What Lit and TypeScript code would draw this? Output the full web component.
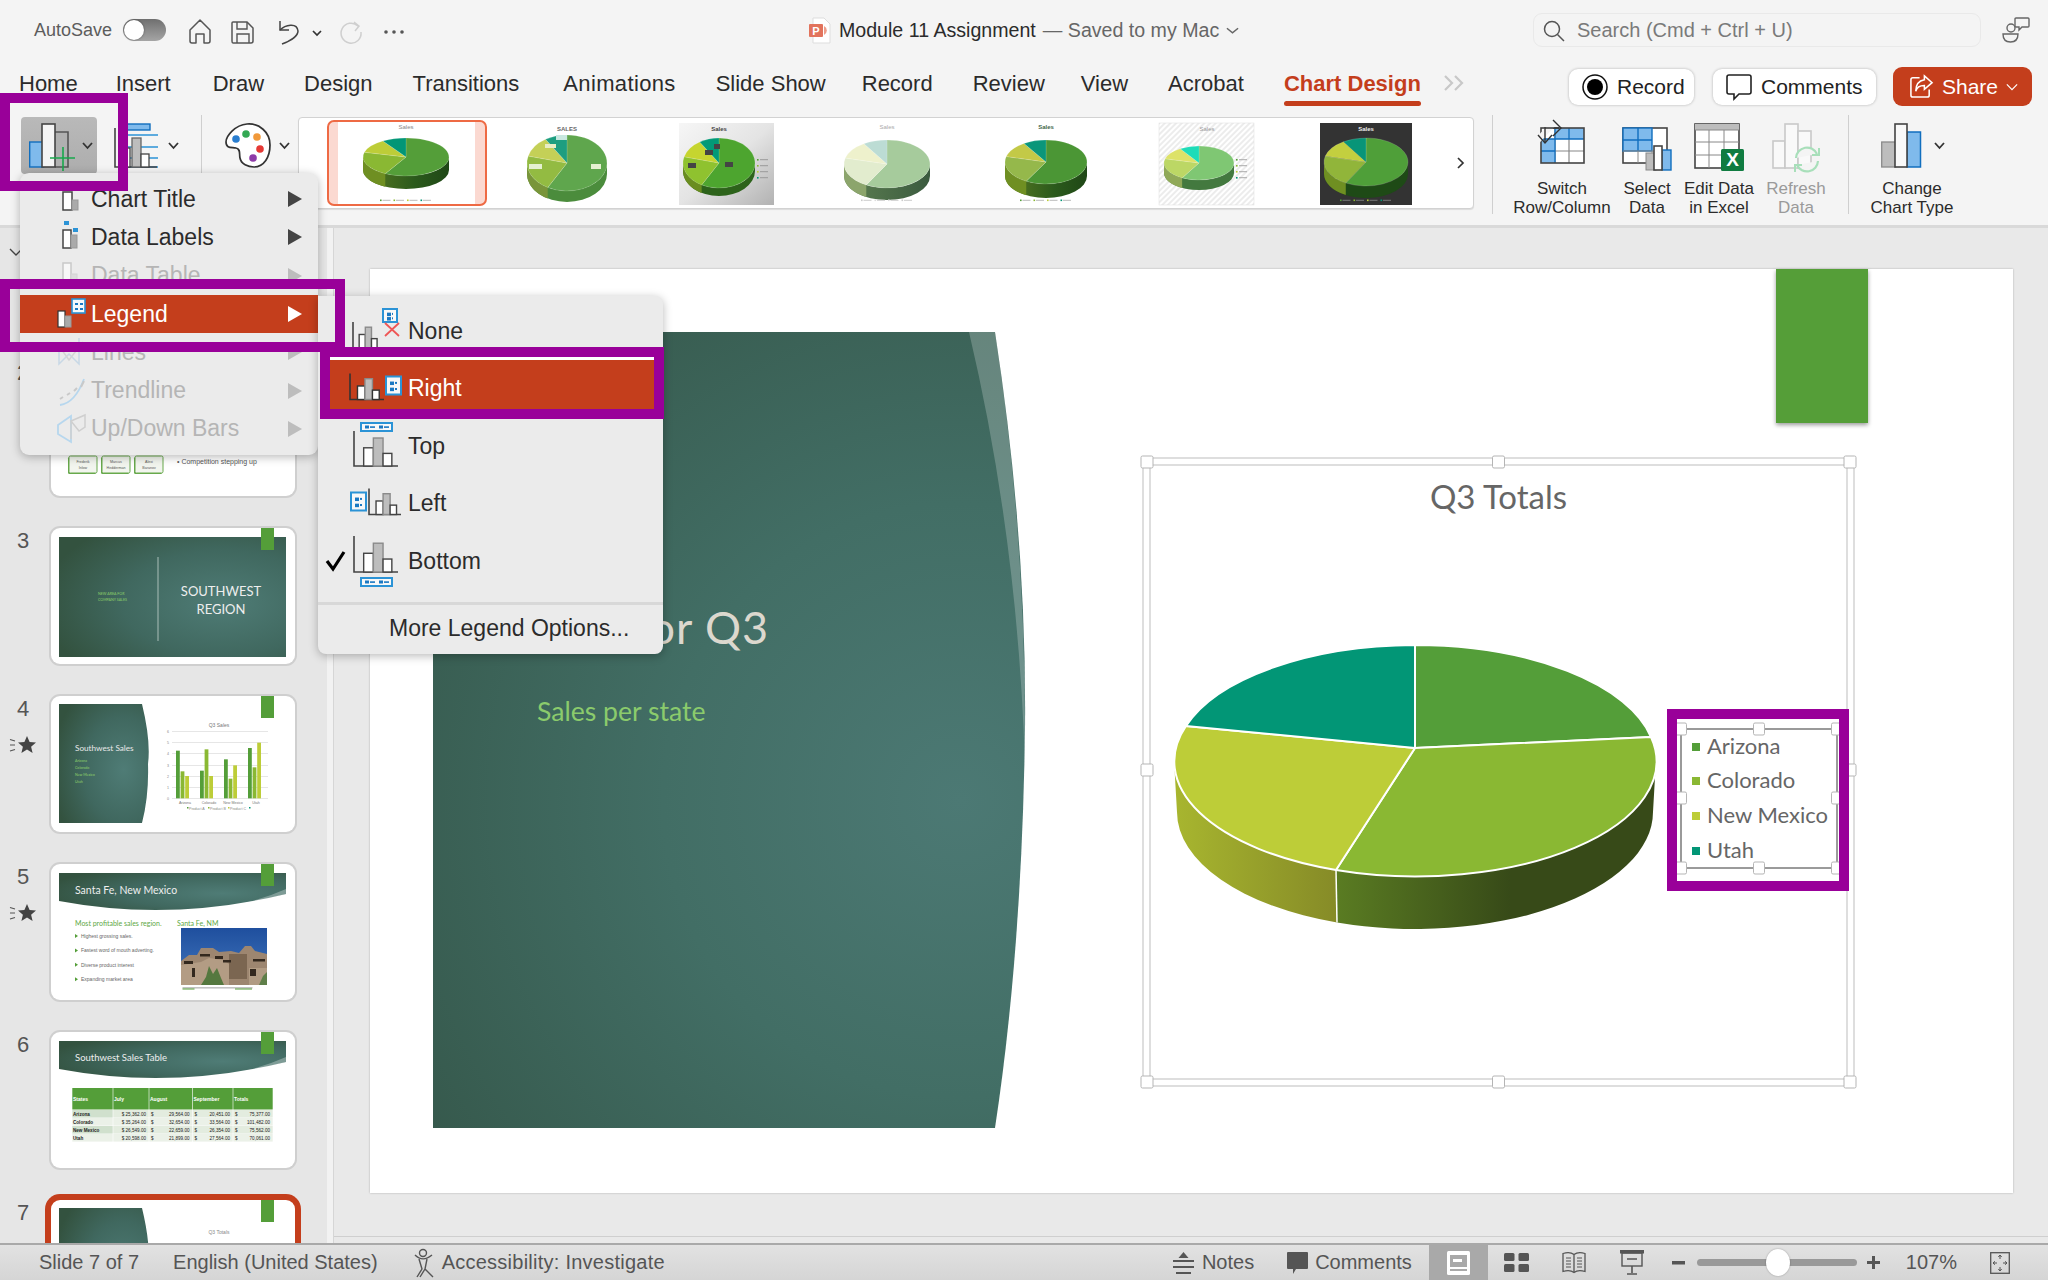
import { LitElement, html, svg, css } from "lit";
import { customElement } from "lit/decorators.js";

const THEME = ["#549e39", "#8ab833", "#bdcd38", "#029676"];

interface PieOpts {
  cx: number; cy: number; rx: number; ry: number; d: number;
  cols: string[]; sideL: string; sideR: string;
}

function pie(o: PieOpts) {
  const fr = [0.58, 0.21, 0.12, 0.09];
  const pt = (f: number) => {
    const a = f * 2 * Math.PI;
    return [o.cx + o.rx * Math.sin(a), o.cy - o.ry * Math.cos(a)];
  };
  let acc = 0;
  const wedges = fr.map((f, i) => {
    const [x1, y1] = pt(acc);
    acc += f;
    const [x2, y2] = pt(acc);
    const large = f > 0.5 ? 1 : 0;
    return svg`<path d="M${o.cx} ${o.cy}L${x1} ${y1}A${o.rx} ${o.ry} 0 ${large} 1 ${x2} ${y2}Z" fill=${o.cols[i]} stroke="#fff" stroke-opacity=".35" stroke-width=".4"/>`;
  });
  const [sx, sy] = pt(fr[0]);
  return svg`
    <path d="M${o.cx - o.rx} ${o.cy}A${o.rx} ${o.ry} 0 0 0 ${o.cx + o.rx} ${o.cy}v${o.d}A${o.rx} ${o.ry} 0 0 1 ${o.cx - o.rx} ${o.cy + o.d}Z" fill=${o.sideR}/>
    <path d="M${o.cx - o.rx} ${o.cy}A${o.rx} ${o.ry} 0 0 0 ${sx} ${sy}v${o.d}A${o.rx} ${o.ry} 0 0 1 ${o.cx - o.rx} ${o.cy + o.d}Z" fill=${o.sideL}/>
    ${wedges}`;
}

function galleryLegend(cx: number, y: number, fill: string, cols: string[] = THEME) {
  return cols.map((c, i) => {
    const x = cx - 26 + i * 13.5;
    return svg`<rect x=${x} y=${y - 1.5} width="1.6" height="1.6" fill=${c}/><rect x=${x + 2.5} y=${y - 1.2} width="8" height="1" fill=${fill}/>`;
  });
}

function sideLegend(x: number, y: number, fill: string) {
  return THEME.map((c, i) => svg`<rect x=${x} y=${y + i * 6} width="1.6" height="1.6" fill=${c}/><rect x=${x + 3} y=${y + i * 6 + 0.2} width="8" height="1" fill=${fill}/>`);
}

const galleryThumbs = [
  svg`<rect x="1" y="1" width="158" height="84" rx="6" fill="#fbd9d1" stroke="#ee6a44" stroke-width="2"/><rect x="11" y="2" width="137" height="82" fill="#fff"/>
    <text x="79" y="9" class="tiny" text-anchor="middle" fill="#888">Sales</text>
    ${pie({ cx: 79, cy: 37, rx: 43, ry: 19, d: 13, cols: THEME, sideL: "#6f8f22", sideR: "url(#wallA)" })}
    ${galleryLegend(79, 81, "#bbb")}`,
  svg`<text x="80" y="11" class="tiny bold" text-anchor="middle" fill="#666">SALES</text>
    ${pie({ cx: 80, cy: 43, rx: 40, ry: 28, d: 11, cols: ["#5fa64d", "#93bb42", "#c4d057", "#1d9e80"], sideL: "#79953a", sideR: "#4b8c3c" })}
    <rect x="42" y="44" width="13" height="5" fill="#e4f0d0"/><rect x="104" y="44" width="10" height="5" fill="#e4f0d0"/><rect x="58" y="24" width="11" height="4" fill="#e8edc4"/><rect x="69" y="15" width="11" height="5" fill="#c8e8e0"/>`,
  svg`<defs><linearGradient id="gv" x1="0" y1="0" x2="1" y2="1"><stop offset="0" stop-color="#f6f6f6"/><stop offset=".5" stop-color="#e4e4e4"/><stop offset="1" stop-color="#b2b2b2"/></linearGradient></defs>
    <rect x="32" y="3" width="95" height="82" fill="url(#gv)"/>
    <text x="72" y="11" class="tiny bold" text-anchor="middle" fill="#444">Sales</text>
    ${pie({ cx: 72, cy: 43, rx: 36, ry: 25, d: 8, cols: ["#4da52f", "#8fc22f", "#c6d52f", "#019a77"], sideL: "#6a8d20", sideR: "#2d631b" })}
    <rect x="78" y="42" width="8" height="5" fill="#444"/><rect x="58" y="30" width="8" height="5" fill="#444"/><rect x="67" y="24" width="6" height="5" fill="#444"/><rect x="41" y="43" width="8" height="5" fill="#444"/>
    ${sideLegend(110, 39, "#999")}`,
  svg`<text x="80" y="9" class="tiny" text-anchor="middle" fill="#aaa">Sales</text>
    ${pie({ cx: 80, cy: 44, rx: 43, ry: 24, d: 12, cols: ["#a6cb9c", "#e2ecce", "#eef1cc", "#bcdcd4"], sideL: "#8ca56c", sideR: "url(#wallP)" })}
    ${galleryLegend(80, 81, "#ccc", ["#ccc", "#ddd", "#ddd", "#ccc"])}`,
  svg`<text x="79" y="9" class="tiny bold" text-anchor="middle" fill="#44684a">Sales</text>
    ${pie({ cx: 79, cy: 42, rx: 41, ry: 22, d: 14, cols: ["#4b9635", "#95b84b", "#c3c947", "#0b967a"], sideL: "#6f8f22", sideR: "url(#wallA)" })}
    ${galleryLegend(79, 81, "#bbb")}`,
  svg`<defs><pattern id="hatch" width="4" height="4" patternUnits="userSpaceOnUse" patternTransform="rotate(45)"><rect width="4" height="4" fill="#fff"/><rect width="2" height="4" fill="#ececec"/></pattern></defs>
    <rect x="32" y="3" width="95" height="82" fill="url(#hatch)" stroke="#ddd" stroke-width=".5"/>
    <text x="80" y="11" class="tiny" text-anchor="middle" fill="#999">Sales</text>
    ${pie({ cx: 72, cy: 43, rx: 35, ry: 17, d: 10, cols: ["#7fc773", "#bcd765", "#dde268", "#1edcb8"], sideL: "#90a958", sideR: "#43793f" })}
    ${sideLegend(109, 39, "#aaa")}`,
  svg`<rect x="33" y="3" width="92" height="82" fill="#333"/>
    <text x="79" y="11" class="tiny bold" text-anchor="middle" fill="#eee">Sales</text>
    ${pie({ cx: 79, cy: 42, rx: 42, ry: 24, d: 12, cols: ["#4f9f39", "#91b53a", "#c3cf3f", "#089578"], sideL: "#6f8f22", sideR: "#1e4a16" })}
    ${galleryLegend(79, 81, "#777")}`,
];

function bars(x: number, y: number, w: number, h: number, stroke = "#444", fillW = "#fff", fillG = "#bdbdbd") {
  const b = y + h;
  return svg`
    <path d="M${x} ${y}V${b}H${x + w}" fill="none" stroke=${stroke} stroke-width="1.6"/>
    <rect x=${x + 0.22 * w} y=${b - 0.52 * h} width=${0.22 * w} height=${0.52 * h} fill=${fillW} stroke=${stroke} stroke-width="1.4"/>
    <rect x=${x + 0.44 * w} y=${b - 0.8 * h} width=${0.22 * w} height=${0.8 * h} fill=${fillG} stroke="#8a8a8a" stroke-width="1.4"/>
    <rect x=${x + 0.66 * w} y=${b - 0.36 * h} width=${0.2 * w} height=${0.36 * h} fill=${fillW} stroke=${stroke} stroke-width="1.4"/>`;
}

function legendV(x: number, y: number, w: number, h: number) {
  return svg`<rect x=${x} y=${y} width=${w} height=${h} fill="#f8f8f8" stroke="#2b93d6" stroke-width="2"/>
    <rect x=${x + 4} y=${y + h * 0.28} width="4" height="3.5" fill="#1a78c2"/><rect x=${x + 9} y=${y + h * 0.3} width=${w - 13} height="2" fill="#1a78c2"/>
    <rect x=${x + 4} y=${y + h * 0.62} width="4" height="3.5" fill="#1a78c2"/><rect x=${x + 9} y=${y + h * 0.64} width=${w - 13} height="2" fill="#1a78c2"/>`;
}

function legendH(x: number, y: number, w: number, h: number) {
  return svg`<rect x=${x} y=${y} width=${w} height=${h} fill="#f8f8f8" stroke="#2b93d6" stroke-width="2"/>
    <rect x=${x + 4} y=${y + h / 2 - 1.5} width="4" height="3" fill="#1a78c2"/><rect x=${x + 9} y=${y + h / 2 - 0.7} width="5" height="1.6" fill="#1a78c2"/>
    <rect x=${x + 18} y=${y + h / 2 - 1.5} width="4" height="3" fill="#1a78c2"/><rect x=${x + 23} y=${y + h / 2 - 0.7} width="5" height="1.6" fill="#1a78c2"/>`;
}

const handles = (pts: number[][], w = 12, h = 12) =>
  pts.map(([x, y]) => svg`<rect x=${x - w / 2} y=${y - h / 2} width=${w} height=${h} rx="1.5" fill="#fff" stroke="#b5b5b5"/>`);

function slideHeader() {
  return svg`<path d="M8 9H235V30Q120 58 8 37Z" fill="url(#slideG)"/><path d="M190 40Q215 36 235 30V25Q215 34 190 40Z" fill="#fff" fill-opacity=".3"/>`;
}
function slidePanel() {
  return svg`<path d="M8 8H91Q100 45 97 68Q98 100 91 127H8Z" fill="url(#slideG)"/>`;
}
const bookmark = svg`<rect x="210" y="0" width="13" height="22" fill="#549e39"/>`;

function thumbSvg(content: unknown) {
  return html`<svg class="thumb-svg" viewBox="0 0 244 136" width="244" height="136">${content}</svg>`;
}

const thumb2 = svg`
  ${[["Frederik", "Inlow", 18], ["Marcus", "Hedderman", 51], ["Alexi", "Baranov", 84]].map(([a, b, x]) => svg`
    <rect x=${(x as number) - 1} y="97" width="28" height="17" rx="1.5" fill="#68a94d"/>
    <rect x=${(x as number)} y="96" width="28" height="17" rx="1.5" fill="#f2f5ee" stroke="#68a94d" stroke-width="1"/>
    <text x=${(x as number) + 14} y="103" class="micro" text-anchor="middle" fill="#555">${a}</text>
    <text x=${(x as number) + 14} y="109" class="micro" text-anchor="middle" fill="#555">${b}</text>`)}
  <text x="126" y="104" class="s6" fill="#555">•  Competition stepping up</text>`;

const thumb3 = svg`<rect x="8" y="9" width="227" height="120" fill="url(#slideG)"/>${bookmark}
  <rect x="106.5" y="29" width="1" height="84" fill="#a9bdb8"/>
  <text x="47" y="67" class="micro lato" fill="#8ed06a">NEW AREA FOR</text><text x="47" y="73" class="micro lato" fill="#8ed06a">COMPANY SALES</text>
  <text x="170" y="68" class="lato s13" text-anchor="middle" fill="#eee">SOUTHWEST</text><text x="170" y="86" class="lato s13" text-anchor="middle" fill="#eee">REGION</text>`;

const chart4Groups = [[528, 272, 334, 348], [600, 332, 268, 348], [672, 298, 356, 316], [744, 264, 322, 248]];
const thumb4 = svg`${slidePanel()}${bookmark}
  <text x="24" y="55" class="lato s8" fill="#e8e8e8">Southwest Sales</text>
  ${["Arizona", "Colorado", "New Mexico", "Utah"].map((t, i) => svg`<text x="24" y=${66 + i * 7} class="micro lato" fill="#8ed06a">${t}</text>`)}
  <text x="168" y="31" class="s5" text-anchor="middle" fill="#777">Q3 Sales</text>
  ${[35, 46, 57, 69, 80, 91, 102].map((y, i) => svg`<rect x="121" y=${y} width="96" height="1" fill="#e6e6e6"/><text x="118" y=${y + 1.5} class="micro" text-anchor="end" fill="#888">${6 - i}</text>`)}
  ${chart4Groups.map((g) => [g[1], g[2], g[3]].map((t, i) => svg`<rect x=${g[0] / 3 - 51 + i * 4.6} y=${t / 3 - 36} width="3.8" height=${(415 - t) / 3} fill=${THEME[i]}/>`))}
  ${[["Arizona", 134], ["Colorado", 158], ["New Mexico", 182], ["Utah", 205]].map(([t, x]) => svg`<text x=${x as number} y="108" class="micro" text-anchor="middle" fill="#777">${t}</text>`)}
  ${[["Product A", 136, 0], ["Product B", 157, 1], ["Product C", 177, 2]].map(([t, x, i]) => svg`<rect x=${x as number} y="111" width="1.5" height="1.5" fill=${THEME[i as number]}/><text x=${(x as number) + 2} y="113.5" class="micro" fill="#888">${t}</text>`)}
  <rect x="198" y="111" width="1.5" height="1.5" fill="#029676"/>`;

const thumb5 = svg`${slideHeader()}${bookmark}
  <text x="24" y="30" class="lato s10" fill="#eee">Santa Fe, New Mexico</text>
  <text x="24" y="62" class="lato s6" fill="#60a845">Most profitable sales region.</text>
  <text x="126" y="62" class="lato s6" fill="#60a845">Santa Fe, NM</text>
  ${["Highest grossing sales.", "Fastest word of mouth adverting.", "Diverse product interest", "Expanding market area"].map((t, i) => svg`
    <path d=${`M24 ${70 + i * 14.4}l3 2l-3 2z`} fill="#549e39"/><text x="30" y=${74 + i * 14.4} class="s5" fill="#666">${t}</text>`)}
  <defs><linearGradient id="sky" x1="0" y1="0" x2="0" y2="1"><stop offset="0" stop-color="#1f4f9e"/><stop offset="1" stop-color="#4277bd"/></linearGradient></defs>
  <rect x="130" y="64" width="86" height="57" fill="url(#sky)"/>
  <path d="M130 97L138 91L146 91L150 84L162 84L168 88L180 87L188 89L194 82L200 82L204 87L216 90V121H130Z" fill="#9d8670"/>
  <path d="M130 101L150 98L158 94L172 96L178 100L178 121H130Z" fill="#b39c84"/>
  <path d="M178 90H196V115H178Z" fill="#7b6651"/><path d="M198 104H216V121H198Z" fill="#b19b83"/>
  <path d="M133 97h9v3h-9zM149 90h10v2.5h-10zM164 92h8v3h-8zM172 96h8v2.5h-8zM202 95h12v2.5h-12zM199 105h6v7h-6zM141 104h3v9h-3z" fill="#33281e"/>
  <path d="M150 121L155 113L158 102L162 110L166 104L170 114L173 121Z" fill="#55783f"/><path d="M208 121L212 112L216 108V121Z" fill="#5f7f49"/>
  <rect x="131.5" y="123.5" width="70" height=".8" fill="#888"/><rect x="131.5" y="124.5" width="12" height="1" fill="#549e39"/><rect x="184" y="124.5" width="17" height="1" fill="#549e39"/>`;

const cols6 = [21, 62, 98, 141.5, 182, 222];
const rows6 = [
  ["Arizona", "$ 25,362.00", "29,564.00", "20,451.00", "75,377.00"],
  ["Colorado", "$ 35,264.00", "32,654.00", "33,564.00", "101,482.00"],
  ["New Mexico", "$ 26,549.00", "22,659.00", "26,354.00", "75,562.00"],
  ["Utah", "$ 20,598.00", "21,899.00", "27,564.00", "70,061.00"],
];
const thumb6 = svg`${slideHeader()}${bookmark}
  <text x="24" y="29" class="lato s9" fill="#eee">Southwest Sales Table</text>
  ${["States", "July", "August", "September", "Totals"].map((t, i) => svg`<rect x=${cols6[i] + 0.3} y="56" width=${cols6[i + 1] - cols6[i] - 0.6} height="21.5" fill="#549e39"/><text x=${cols6[i] + 1} y="68.5" class="s5 bold" fill="#fff">${t}</text>`)}
  ${rows6.map((r, ri) => r.map((t, ci) => svg`
    <rect x=${cols6[ci] + 0.3} y=${78 + ri * 8} width=${cols6[ci + 1] - cols6[ci] - 0.6} height="7.6" fill=${ri % 2 === 0 ? (ci === 0 ? "#d0e0cd" : "#e3ecdf") : "#ebf1e8"}/>
    <text x=${ci === 0 ? cols6[0] + 1 : cols6[ci + 1] - 3} y=${84 + ri * 8} class=${ci === 0 ? "t45 bold" : "t45"} text-anchor=${ci === 0 ? "start" : "end"} fill="#222">${t}</text>
    ${ci > 1 ? svg`<text x=${cols6[ci] + 2} y=${84 + ri * 8} class="t45" fill="#222">$</text>` : ""}`))}`;

const thumb7 = svg`<path d="M8 8H91Q100 45 97 68Q98 100 91 127H8Z" fill="url(#slideG)"/>${bookmark}
  <text x="168" y="34" class="s5" text-anchor="middle" fill="#888">Q3 Totals</text>`;

const star = html`<svg class="star" viewBox="0 0 26 20" width="26" height="20">
  <path d="M0 4.5l5 1.5M0 10h5M0 16l5-1.5" stroke="#555" stroke-width="1.2" fill="none"/>
  <path d="M17 1l2.6 6 6.4.5-4.9 4.2 1.5 6.3-5.6-3.4-5.6 3.4 1.5-6.3-4.9-4.2 6.4-.5z" fill="#444"/></svg>`;

const slides = [
  { n: 2, content: thumb2 },
  { n: 3, content: thumb3 },
  { n: 4, content: thumb4, star: true },
  { n: 5, content: thumb5, star: true },
  { n: 6, content: thumb6 },
  { n: 7, content: thumb7, active: true },
];

const menuIcons: Record<string, unknown> = {
  "Chart Title": svg`<rect x="6" y="9" width="9" height="18" fill="#fff" stroke="#444" stroke-width="1.5"/><rect x="15" y="17" width="6" height="10" fill="#aaa" stroke="#999"/><rect x="4" y="3" width="18" height="3" fill="#1a78c2"/>`,
  "Data Labels": svg`<rect x="6" y="9" width="8" height="18" fill="#fff" stroke="#444" stroke-width="1.5"/><rect x="14" y="14" width="6" height="13" fill="#aaa" stroke="#999"/><rect x="7" y="0" width="5" height="4" fill="#2b93d6"/><rect x="16" y="7" width="5" height="4" fill="#2b93d6"/>`,
  "Data Table": svg`<rect x="6" y="3" width="8" height="24" fill="#f7f7f7" stroke="#c9c9c9" stroke-width="1.5"/><rect x="14" y="14" width="6" height="13" fill="#ddd" stroke="#d4d4d4"/>`,
  Legend: svg`<rect x="1" y="13" width="7" height="16" fill="#fff" stroke="#333" stroke-width="1.2"/><rect x="8" y="18" width="6" height="11" fill="#aaa" stroke="#999"/>
    <rect x="15" y="1" width="13" height="14" fill="#f4f8fb" stroke="#2b93d6" stroke-width="1.6"/><path d="M18 5h3v2h-3zM23 5h3v2h-3zM18 10h3v2h-3zM23 10h3v2h-3z" fill="#1a78c2"/>`,
  Lines: svg`<path d="M2 6v22l10-10 10 10V2" fill="none" stroke="#c8d8e6" stroke-width="1.5"/><path d="M2 10l10 14 14-18" fill="none" stroke="#d4d4d4" stroke-width="1.5"/>`,
  Trendline: svg`<path d="M3 30Q18 28 27 4" fill="none" stroke="#b7d7ee" stroke-width="1.8"/><path d="M3 24l3-2M10 20l3-2M17 16l3-3M24 12l3-6" stroke="#c9c9c9" stroke-width="2" fill="none"/>`,
  "Up/Down Bars": svg`<path d="M1 12L14 3V29L1 21Z" fill="none" stroke="#b7d7ee" stroke-width="1.8"/><path d="M14 8V26M14 8L28 2V14L22 18Z" fill="none" stroke="#cfcfcf" stroke-width="1.5"/>`,
};

const menuItems = [
  { t: "Chart Title" },
  { t: "Data Labels" },
  { t: "Data Table", off: true },
  { t: "Legend", on: true },
  { t: "Lines", off: true },
  { t: "Trendline", off: true },
  { t: "Up/Down Bars", off: true },
];

const subItems = [
  { t: "None", c: 331, icon: svg`${bars(353, 322, 28, 26)}${legendV(383, 309, 14, 13)}<path d="M385 323L399 336M399 323L385 336" stroke="#ee5656" stroke-width="1.8"/>` },
  { t: "Right", c: 388.5, on: true, icon: svg`${bars(350, 373, 34, 26, "#333")}${legendV(386, 376, 15, 18)}` },
  { t: "Top", c: 446, icon: svg`${legendH(361, 423, 31, 8)}${bars(354, 431, 44, 35)}` },
  { t: "Left", c: 503.5, icon: svg`${legendV(351, 492, 15, 18)}${bars(369, 488, 32, 26)}` },
  { t: "Bottom", c: 561, icon: svg`<path d="M327 561L333 569L344 552" fill="none" stroke="#000" stroke-width="3.2"/>${bars(354, 536, 44, 36)}${legendH(361, 578, 31, 8)}` },
];

const ribbonCmds = [
  {
    lines: ["Switch", "Row/Column"], cls: "w100", vb: "1536 117 50 57",
    art: svg`<rect x="1540" y="128" width="43" height="35" fill="#fff"/>
      <path d="M1554 128V163M1568 128V163M1540 151H1583" stroke="#888" stroke-width="1.2"/>
      <path d="M1554 128h29v11h-29zM1540 139h14v24h-14z" fill="#7fbaec"/><path d="M1568 128V139M1540 151H1554M1554 128V163M1540 139H1583" stroke="#106ebe" stroke-width="1.3"/>
      <rect x="1540" y="128" width="43" height="35" fill="none" stroke="#444" stroke-width="1.6"/>
      <path d="M1536 141L1557 119" stroke="#f4f4f4" stroke-width="6"/>
      <path d="M1544 143V128H1558" fill="none" stroke="#333" stroke-width="1.4"/><path d="M1552 120l8 8-8 8M1537 135l7 8 7-8" fill="none" stroke="#333" stroke-width="1.4"/>`,
  },
  {
    lines: ["Select", "Data"], cls: "w70", vb: "1623 117 52 57",
    art: svg`<rect x="1625" y="128" width="44" height="35" fill="#fff" stroke="#444" stroke-width="1.6"/>
      <rect x="1625" y="128" width="29" height="23" fill="#7fbaec" stroke="#106ebe" stroke-width="1.4"/><path d="M1640 128V151M1625 140H1654" stroke="#106ebe" stroke-width="1.4"/>
      <path d="M1640 151V163M1654 151V163M1625 151H1669" stroke="#888" stroke-width="1"/>
      <rect x="1648" y="153" width="10" height="17" fill="#bdbdbd" stroke="#8a8a8a"/><rect x="1664" y="150" width="9" height="20" fill="#7fbaec" stroke="#106ebe" stroke-width="1.4"/><rect x="1656" y="146" width="8" height="24" fill="#fff" stroke="#444" stroke-width="1.6"/>`,
  },
  {
    lines: ["Edit Data", "in Excel"], cls: "w74", vb: "1695 117 52 57",
    art: svg`<rect x="1697" y="124" width="44" height="44" fill="#fff" stroke="#444" stroke-width="1.6"/><rect x="1697" y="124" width="44" height="6" fill="#bdbdbd"/>
      <path d="M1711 130V168M1726 130V168M1697 130H1741M1697 142H1741M1697 155H1741" stroke="#888" stroke-width="1"/>
      <rect x="1723" y="149" width="23" height="22" rx="1.5" fill="#107c41"/><text x="1734.5" y="166" class="xl" text-anchor="middle" fill="#fff">X</text>`,
  },
  {
    lines: ["Refresh", "Data"], cls: "w80 off", vb: "1773 117 52 57",
    art: svg`<rect x="1776" y="141" width="12" height="27" fill="#f9f9f9" stroke="#c9c9c9" stroke-width="1.6"/><rect x="1788" y="124" width="13" height="44" fill="#f9f9f9" stroke="#c9c9c9" stroke-width="1.6"/><rect x="1801" y="131" width="13" height="37" fill="#f9f9f9" stroke="#c9c9c9" stroke-width="1.6"/>
      <path d="M1799 158a11 11 0 0 1 21-4M1821 161a11 11 0 0 1-21 4" fill="#f4f4f4" stroke="#a8dfba" stroke-width="2.2"/><path d="M1822 148v7h-7M1798 172v-7h7" fill="none" stroke="#a8dfba" stroke-width="2"/>`,
  },
];

const qatIcons = svg`
  <path d="M190 30L200 20L210 30V41Q210 43 208 43H204V34H196V43H192Q190 43 190 41Z" fill="none" stroke="#555" stroke-width="1.5" stroke-linejoin="round"/>
  <path d="M233 22h14l6 6v13q0 2-2 2h-18q-1 0-1-2V23q0-1 1-1z" fill="none" stroke="#555" stroke-width="1.5"/><path d="M237 22v7h10v-7M237 43v-9h12v9" fill="none" stroke="#555" stroke-width="1.4"/>
  <path d="M280 21v9h9" fill="none" stroke="#444" stroke-width="1.5"/><path d="M280 30c5-5 17-8 18 1 0 5-8 10-16 13" fill="none" stroke="#444" stroke-width="1.5"/>
  <path d="M313 31l4 4 4-4" fill="none" stroke="#333" stroke-width="1.7"/>
  <path d="M358 26a10 10 0 1 0 3 6M354 22l5 4-4 5" fill="none" stroke="#cfcfcf" stroke-width="1.5"/>
  <circle cx="386" cy="32" r="1.8" fill="#555"/><circle cx="394" cy="32" r="1.8" fill="#555"/><circle cx="402" cy="32" r="1.8" fill="#555"/>`;

@customElement("app-root")
export class AppRoot extends LitElement {
  static styles = css`
    :host { display: block; width: 2048px; height: 1280px; position: relative; overflow: hidden; font-family: "Liberation Sans", Arial, sans-serif; background: #f4f4f4; color: #2b2b2b; }
    svg { display: block; overflow: visible; }
    svg text { font-family: "Liberation Sans", Arial, sans-serif; }
    svg text.lato { font-family: Lato, "Open Sans", sans-serif; }
    .defs { position: absolute; width: 0; height: 0; }
    .tiny { font-size: 6px; } .bold { font-weight: 700; } .micro { font-size: 3.6px; } .t45 { font-size: 4.6px; } .s5 { font-size: 5px; } .s6 { font-size: 7px; }
    .s8 { font-size: 8.2px; } .s9 { font-size: 9.5px; } .s10 { font-size: 10.5px; } .s13 { font-size: 13px; }
    .xl { font-size: 19px; font-weight: 700; }

    .shell { display: grid; grid-template-rows: 60px 53px 115px 1fr 37px; height: 1280px; }

    .titlebar { display: grid; grid-template-columns: 180px 629px 724px 1fr; align-items: center; }
    .autosave { display: flex; align-items: center; padding-left: 34px; font-size: 18px; color: #5c5c5c; }
    .toggle { margin-left: 11px; width: 43px; height: 22px; border-radius: 11px; background: linear-gradient(#6f6f6f, #a5a5a5); display: flex; align-items: center; padding: 1px; box-sizing: border-box; flex: none; }
    .knob { width: 20px; height: 20px; border-radius: 50%; background: #fff; box-shadow: 0 0 2px rgba(0,0,0,.5); }
    .doc { display: flex; align-items: center; font-size: 19.6px; padding-top: 1px; }
    .doc .saved { color: #666; margin-left: 7px; }
    .doc svg { margin-right: 9px; }
    .doc .cv { margin: 0 0 0 7px; }
    .tb-right { display: flex; align-items: center; }
    .search { width: 448px; height: 34px; box-sizing: border-box; border: 1px solid #e9e9e9; border-radius: 9px; display: flex; align-items: center; padding-left: 9px; padding-top: 1px; color: #7a7a7a; font-size: 20px; }
    .search svg { margin-right: 12px; }
    .people { margin-left: 21px; }

    .tabs { display: flex; align-items: flex-start; padding-left: 19px; padding-right: 16px; }
    .tab-list { display: flex; gap: 40px; }
    .tab { font-size: 22px; height: 46px; line-height: 48px; color: #2b2b2b; position: relative; }
    .tab:nth-child(2) { margin-left: -2px; }
    .tab:nth-child(3) { margin-left: 2px; }
    .tab:nth-child(6) { margin-left: 4px; letter-spacing: .35px; }
    .tab:nth-child(7) { margin-right: -4px; }
    .tab:nth-child(10) { margin-left: -4px; }
    .tab.cur { color: #c43e1c; font-weight: 700; }
    .tab.cur::after { content: ""; position: absolute; left: 0; right: 0; bottom: 0; height: 5px; border-radius: 3px; background: #c43e1c; }
    .more { margin: 15px 0 0 23px; }
    .actions { margin-left: auto; display: flex; align-items: center; margin-top: 7px; }
    .btn { display: flex; align-items: center; box-sizing: border-box; height: 36px; background: #fff; border-radius: 9px; box-shadow: 0 0 3px rgba(0,0,0,.28); font-size: 21px; color: #222; }
    .btn.rec { width: 125px; padding-left: 13px; gap: 9px; }
    .btn.com { width: 163px; margin-left: 19px; padding-left: 13px; gap: 9px; }
    .btn.share { width: 139px; height: 39px; margin-left: 17px; background: #c43e1c; color: #fff; padding-left: 16px; gap: 8px; box-shadow: none; }

    .ribbon { display: flex; align-items: flex-start; padding-top: 4px; padding-left: 21px; border-bottom: 3px solid #d9d9d9; box-sizing: border-box; }
    .rb { height: 57px; display: flex; align-items: center; box-sizing: border-box; position: relative; }
    .rb.hot { width: 76px; padding-left: 8px; background: linear-gradient(#b9b9b9, #adadad); border-radius: 4px; gap: 5px; }
    .rb.hot > svg:first-child { margin-top: 3px; }
    .rb.layout { width: 104px; padding-left: 17px; gap: 8px; }
    .rb.pal { width: 96px; padding-left: 24px; gap: 7px; }
    .vsep { width: 1px; height: 99px; background: #cfcfcf; flex: none; margin-top: -2px; }
    .gallery { width: 1176px; height: 92px; box-sizing: border-box; background: #fff; border: 1px solid #d2d2d2; border-radius: 4px; box-shadow: 0 1px 1px rgba(0,0,0,.1); display: flex; align-items: center; padding-left: 28px; margin-right: 18px; margin-left: 0; }
    .gitem { width: 160px; height: 86px; flex: none; }
    .gnext { margin-left: 10px; }
    .cmd { display: flex; flex-direction: column; align-items: center; font-size: 17px; line-height: 19px; color: #2b2b2b; text-align: center; }
    .cmd .ic { height: 57px; margin-bottom: 5px; }
    .cmd.off { color: #9a9a9a; }
    .w100 { width: 100px; margin-left: 19px; } .w70 { width: 70px; } .w74 { width: 74px; } .w80 { width: 80px; }
    .vsep.b { margin-left: 12px; }
    .cmd.change { width: 100px; margin-left: 13px; }
    .cmd .ict { display: flex; align-items: center; gap: 12px; margin-left: 19px; height: 57px; margin-bottom: 5px; align-self: flex-start; }

    .body { display: flex; min-height: 0; overflow: hidden; }
    .panel { width: 327px; flex: none; background: #e6e6e6; overflow: hidden; box-sizing: border-box; padding: 20px 0 0 0; }
    .panel-cv { margin-left: 9px; height: 111.5px; }
    .row { display: flex; height: 168px; }
    .num-col { width: 51px; flex: none; display: flex; flex-direction: column; box-sizing: border-box; padding-left: 17px; font-size: 22px; line-height: 26px; color: #555; }
    .star { margin: 13px 0 0 -7px; }
    .thumb { width: 244px; height: 136px; box-sizing: border-box; background: #fff; border-radius: 9px; box-shadow: 0 0 0 2px #cfcfcf; overflow: hidden; flex: none; }
    .thumb.cur { box-shadow: 0 0 0 6px #c43e1c; }
    .strip { width: 6px; background: #f2f2f2; border-right: 1px solid #d6d6d6; flex: none; }
    .main { flex: 1; background: #e9e9e9; padding: 41px 35px 0 36px; position: relative; min-width: 0; }
    .slide { width: 1643px; height: 924px; background: #fff; box-shadow: 0 0 2px rgba(0,0,0,.25); }
    .hbar { position: absolute; left: 0; right: 0; bottom: 6px; height: 1px; background: #cfcfcf; }
    svg text.title-text { font-family: Lato, "Open Sans", sans-serif; font-size: 45px; font-weight: 400; letter-spacing: 1px; }
    svg text.sub-text { font-family: Lato, "Open Sans", sans-serif; font-size: 26.6px; }
    svg text.ctitle { font-family: Lato, "Open Sans", sans-serif; font-size: 33px; font-weight: 400; }
    svg text.leg-text { font-family: Lato, "Open Sans", sans-serif; font-size: 22px; font-weight: 400; }

    .status { display: flex; align-items: center; border-top: 2px solid #a9a9a9; background: linear-gradient(#e2e2e2, #d5d5d5); font-size: 20px; color: #555; box-sizing: border-box; padding-left: 39px; }
    .st-l { display: flex; align-items: center; gap: 34px; }
    .acc { display: flex; align-items: center; gap: 5px; }
    .acc span { letter-spacing: .25px; }
    .st-r { margin-left: auto; display: flex; align-items: center; height: 100%; padding-right: 38px; }
    .active-view { width: 59px; height: 100%; background: #a9a9a9; display: flex; align-items: center; justify-content: center; }
    .m8 { margin-left: 8px; } .m7 { margin-left: 7px; } .m33 { margin-left: 33px; } .m17 { margin-left: 17px; } .m16 { margin-left: 16px; }
    .m34 { margin-left: 34px; } .m28 { margin-left: 28px; } .m26 { margin-left: 26px; } .m12 { margin-left: 12px; } .m10 { margin-left: 10px; }
    .slider { width: 160px; height: 7px; border-radius: 4px; background: #999; position: relative; }
    .thumbk { position: absolute; left: 69px; top: -10px; width: 24px; height: 27px; border-radius: 50%; background: #fff; box-shadow: 0 0 2px rgba(0,0,0,.3); }

    .menu { position: absolute; left: 20px; top: 173px; width: 298px; box-sizing: border-box; padding: 7px 0; background: #ebebeb; border-radius: 9px; box-shadow: 0 2px 10px rgba(0,0,0,.28); font-size: 23px; }
    .mi { height: 38.3px; display: flex; align-items: center; padding-left: 35px; color: #2b2b2b; }
    .mi .mic { width: 36px; margin-right: 0; flex: none; }
    .mi.off { color: #b5b5b5; }
    .mi.on { background: #c43e1c; color: #fff; }
    .arrow { margin-left: auto; margin-right: 16px; width: 0; height: 0; border-left: 14px solid #444; border-top: 8.5px solid transparent; border-bottom: 8.5px solid transparent; }
    .mi.off .arrow { border-left-color: #bdbdbd; }
    .mi.on .arrow { border-left-color: #fff; }
    .submenu { position: absolute; left: 318px; top: 296px; width: 345px; box-sizing: border-box; padding-top: 6.25px; height: 358px; background: #ebebeb; border-radius: 0 8px 8px 8px; box-shadow: 0 2px 10px rgba(0,0,0,.28); font-size: 23px; }
    .si { height: 57.5px; display: flex; align-items: center; margin: 0 2px; color: #2b2b2b; }
    .si.on { background: #c43e1c; color: #fff; box-shadow: 0 -3px 0 #fff; }
    .smore { margin-top: 12px; border-top: 3px solid #d8d8d8; height: 48px; display: flex; align-items: center; padding-left: 71px; color: #2b2b2b; }
    .hl { position: absolute; box-sizing: border-box; border: 10px solid #990099; pointer-events: none; }
    .hl-a { left: 0; top: 93px; width: 128px; height: 98px; }
    .hl-b { left: 0; top: 279px; width: 345px; height: 73px; }
    .hl-c { left: 320px; top: 347px; width: 344px; height: 72px; }
  `;

  render() {
    return html`
      <svg class="defs" aria-hidden="true"><defs>
        <radialGradient id="slideG" cx=".72" cy=".55" r=".8"><stop offset="0" stop-color="#4f7c76"/><stop offset=".55" stop-color="#40685f"/><stop offset="1" stop-color="#33523f"/></radialGradient>
        <linearGradient id="wallA"><stop offset="0" stop-color="#5a7a22"/><stop offset=".6" stop-color="#2b5a1c"/><stop offset="1" stop-color="#1f4716"/></linearGradient>
        <linearGradient id="wallP"><stop offset="0" stop-color="#5e8052"/><stop offset="1" stop-color="#3a5a3e"/></linearGradient>
      </defs></svg>
      <div class="shell">
        ${this.titleBar()}
        ${this.tabBar()}
        ${this.ribbon()}
        <div class="body">
          <div class="panel">
            <div class="panel-cv"><svg viewBox="0 0 14 8" width="14" height="8"><path d="M1 1l6 6 6-6" fill="none" stroke="#444" stroke-width="1.4"/></svg></div>
            ${slides.map((s) => html`
              <div class="row">
                <div class="num-col"><span>${s.n}</span>${s.star ? star : ""}</div>
                <div class="thumb ${s.active ? "cur" : ""}">${thumbSvg(s.content)}</div>
              </div>`)}
          </div>
          <div class="strip"></div>
          <div class="main">
            <div class="slide">${this.slideCanvas()}</div>
            <div class="hbar"></div>
          </div>
        </div>
        ${this.statusBar()}
      </div>
      <div class="menu">
        ${menuItems.map((m) => html`
          <div class="mi ${m.off ? "off" : ""} ${m.on ? "on" : ""}">
            <svg class="mic" viewBox="0 0 32 32" width="32" height="32">${menuIcons[m.t]}</svg>
            <span>${m.t}</span><i class="arrow"></i>
          </div>`)}
      </div>
      <div class="submenu">
        ${subItems.map((s) => html`
          <div class="si ${s.on ? "on" : ""}">
            <svg viewBox="320 ${s.c - 29} 88 58" width="88" height="58">${s.icon}</svg>
            <span>${s.t}</span>
          </div>`)}
        <div class="smore">More Legend Options...</div>
      </div>
      <div class="hl hl-a"></div>
      <div class="hl hl-b"></div>
      <div class="hl hl-c"></div>
    `;
  }

  titleBar() {
    return html`<div class="titlebar">
      <div class="autosave"><span>AutoSave</span><div class="toggle"><div class="knob"></div></div></div>
      <svg viewBox="180 0 629 60" width="629" height="60">${qatIcons}</svg>
      <div class="doc">
        <svg viewBox="0 0 21 25" width="21" height="25"><path d="M4 0h11l6 6v19H4z" fill="#fff" stroke="#ddd"/><rect x="0" y="6" width="14" height="13" rx="1" fill="#e2735c"/><text x="7" y="16.5" font-size="11" font-weight="700" text-anchor="middle" fill="#fff">P</text><path d="M15 8a5 5 0 0 1 0 9z" fill="#ee9d8a"/></svg>
        <span>Module 11 Assignment</span><span class="saved">— Saved to my Mac</span>
        <svg class="cv" viewBox="0 0 14 8" width="13" height="8"><path d="M1 1l6 5 6-5" fill="none" stroke="#666" stroke-width="1.6"/></svg>
      </div>
      <div class="tb-right">
        <div class="search">
          <svg viewBox="0 0 22 22" width="22" height="22"><circle cx="9" cy="9" r="7.5" fill="none" stroke="#555" stroke-width="1.5"/><path d="M14.5 14.5L21 21" stroke="#555" stroke-width="1.5"/></svg>
          <span>Search (Cmd + Ctrl + U)</span>
        </div>
        <svg class="people" viewBox="0 0 28 26" width="28" height="26"><circle cx="9" cy="11" r="4" fill="none" stroke="#666" stroke-width="1.4"/><path d="M1 17h15q0 8-7.5 8T1 17z" fill="none" stroke="#666" stroke-width="1.4"/><path d="M14 1h12q1 0 1 1v7q0 1-1 1h-6l-3 3v-3h-3q-1 0-1-1V2q0-1 1-1z" fill="none" stroke="#666" stroke-width="1.4"/></svg>
      </div>
    </div>`;
  }

  tabBar() {
    const tabs = ["Home", "Insert", "Draw", "Design", "Transitions", "Animations", "Slide Show", "Record", "Review", "View", "Acrobat"];
    return html`<div class="tabs">
      <div class="tab-list">
        ${tabs.map((t) => html`<div class="tab">${t}</div>`)}
        <div class="tab cur">Chart Design</div>
      </div>
      <svg class="more" viewBox="0 0 20 16" width="20" height="16"><path d="M1 1l7 7-7 7M11 1l7 7-7 7" fill="none" stroke="#c8c8c8" stroke-width="2.2"/></svg>
      <div class="actions">
        <div class="btn rec"><svg viewBox="0 0 26 26" width="26" height="26"><circle cx="13" cy="13" r="12" fill="none" stroke="#111" stroke-width="1.5"/><circle cx="13" cy="13" r="8" fill="#000"/></svg><span>Record</span></div>
        <div class="btn com"><svg viewBox="0 0 26 28" width="26" height="28"><path d="M3 2h20q2 0 2 2v15q0 2-2 2H13l-5 5v-5H3q-2 0-2-2V4q0-2 2-2z" fill="none" stroke="#222" stroke-width="1.6"/></svg><span>Comments</span></div>
        <div class="btn share">
          <svg viewBox="0 0 26 26" width="25" height="25"><path d="M11 4H4q-2 0-2 2v16q0 2 2 2h15q2 0 2-2v-6" fill="none" stroke="#fff" stroke-width="1.6"/><path d="M16 2l8 7-8 7v-4c-5 0-8 2-9 6 0-7 3-11 9-12z" fill="none" stroke="#fff" stroke-width="1.6"/></svg>
          <span>Share</span>
          <svg viewBox="0 0 14 8" width="12" height="8"><path d="M1 1l6 6 6-6" fill="none" stroke="#fff" stroke-width="1.4"/></svg>
        </div>
      </div>
    </div>`;
  }

  ribbon() {
    const chev = svg`<path d="M1 1l4.5 5L10 1" fill="none" stroke="#333" stroke-width="1.8"/>`;
    return html`<div class="ribbon">
      <div class="rb hot">
        <svg viewBox="29 123 48 48" width="48" height="48">
          <rect x="29.7" y="142" width="14" height="25" fill="#7fbaec" stroke="#106ebe" stroke-width="1.4"/>
          <path d="M55 132H68V167H55" fill="#b0b0b0" stroke="#555" stroke-width="1.6"/>
          <rect x="42" y="124" width="13" height="43" fill="#f4f4f4" stroke="#444" stroke-width="1.6"/>
          <path d="M63 147V171M50 158H75" stroke="#18a84c" stroke-width="1.6"/>
        </svg>
        <svg viewBox="0 0 11 7" width="11" height="7">${chev}</svg>
      </div>
      <div class="rb layout">
        <svg viewBox="114 123 46 46" width="46" height="46">
          <rect x="127" y="124" width="23" height="6" fill="#7fbaec" stroke="#106ebe" stroke-width="1.4"/>
          <path d="M122 135H158M122 147H158M122 158H158M120 167H158" stroke="#2b93d6" stroke-width="1.5"/>
          <path d="M115 128V167H157" fill="none" stroke="#444" stroke-width="1.6"/>
          <rect x="132" y="138" width="9" height="29" fill="#bdbdbd" stroke="#666" stroke-width="1.3"/>
          <rect x="120" y="148" width="10" height="19" fill="#fff" stroke="#444" stroke-width="1.3"/>
          <rect x="141" y="154" width="8" height="13" fill="#fff" stroke="#444" stroke-width="1.3"/>
        </svg>
        <svg viewBox="0 0 11 7" width="11" height="7">${chev}</svg>
      </div>
      <div class="vsep"></div>
      <div class="rb pal">
        <svg viewBox="225 123 46 46" width="46" height="46">
          <path d="M246 124c-12 1-21 12-21 18 0 7 6 5 10 6 5 1 3 6 4 10 1 6 8 9 14 9 10 0 16-10 16-22 0-13-11-22-23-21z" fill="#fff" stroke="#333" stroke-width="1.7"/>
          <circle cx="235" cy="139" r="3.8" fill="#2a7ed0"/><circle cx="245" cy="134" r="3.8" fill="#33a853"/><circle cx="256" cy="137" r="3.8" fill="#f1993a"/><circle cx="259" cy="149" r="3.8" fill="#e53935"/><circle cx="252" cy="158" r="3.8" fill="#8e3ba8"/>
        </svg>
        <svg viewBox="0 0 11 7" width="11" height="7">${chev}</svg>
      </div>
      <div class="gallery">
        ${galleryThumbs.map((g) => html`<svg class="gitem" viewBox="0 0 160 86" width="160" height="86">${g}</svg>`)}
        <svg class="gnext" viewBox="0 0 8 12" width="8" height="12"><path d="M1 1l5 5-5 5" fill="none" stroke="#333" stroke-width="1.7"/></svg>
      </div>
      <div class="vsep"></div>
      ${ribbonCmds.map((c) => {
        const p = c.vb.split(" ");
        return html`<div class="cmd ${c.cls}">
          <div class="ic"><svg viewBox=${c.vb} width=${p[2]} height=${p[3]}>${c.art}</svg></div>
          <span>${c.lines[0]}</span><span>${c.lines[1]}</span>
        </div>`;
      })}
      <div class="vsep b"></div>
      <div class="cmd change">
        <div class="ict">
          <svg viewBox="1881 123 41 46" width="41" height="46">
            <rect x="1881.7" y="142" width="14" height="25" fill="#bdbdbd" stroke="#8a8a8a" stroke-width="1.3"/>
            <rect x="1907" y="132" width="13.5" height="35" fill="#7fbaec" stroke="#106ebe" stroke-width="1.5"/>
            <rect x="1895" y="124" width="12" height="43" fill="#f9f9f9" stroke="#444" stroke-width="1.6"/>
          </svg>
          <svg viewBox="0 0 11 7" width="11" height="7">${chev}</svg>
        </div>
        <span>Change</span><span>Chart Type</span>
      </div>
    </div>`;
  }

  slideCanvas() {
    const frame = [[1147, 462], [1498.5, 462], [1850, 462], [1147, 770], [1850, 770], [1147, 1082], [1498.5, 1082], [1850, 1082]];
    const leg = [[1681, 729], [1759, 729], [1837, 729], [1681, 798], [1837, 798], [1681, 868], [1759, 868], [1837, 868]];
    const items = [["Arizona", 746, 0], ["Colorado", 780, 1], ["New Mexico", 815, 2], ["Utah", 850, 3]] as [string, number, number][];
    return html`<svg viewBox="370 269 1643 924" width="1643" height="924">
      <defs>
        <radialGradient id="panelG" gradientUnits="userSpaceOnUse" cx="960" cy="800" r="660"><stop offset="0" stop-color="#4c7974"/><stop offset=".45" stop-color="#426e65"/><stop offset="1" stop-color="#35574a"/></radialGradient>
        <linearGradient id="wl" gradientUnits="userSpaceOnUse" x1="1174" x2="1336" y1="0" y2="0"><stop offset="0" stop-color="#a8b62f"/><stop offset="1" stop-color="#868b27"/></linearGradient>
        <linearGradient id="wr" gradientUnits="userSpaceOnUse" x1="1336" x2="1510" y1="0" y2="0"><stop offset="0" stop-color="#5a7c22"/><stop offset="1" stop-color="#374a18"/></linearGradient>
        <filter id="bs" x="-20%" y="-20%" width="140%" height="140%"><feDropShadow dx="0" dy="2" stdDeviation="2" flood-opacity=".4"/></filter>
      </defs>
      <rect x="1776" y="269" width="92" height="154" fill="#549e39" filter="url(#bs)"/>
      <path d="M433 332H995Q1027 540 1025 730Q1022 950 995 1128H433Z" fill="url(#panelG)"/>
      <path d="M969 332H995Q1027 540 1025 765Q1018 540 969 332Z" fill="#fff" fill-opacity=".22"/>
      <text x="769" y="644" text-anchor="end" class="title-text" fill="#dcd8ce">or Q3</text>
      <text x="537" y="721" class="sub-text" fill="#8bcb6c">Sales per state</text>

      <rect x="1146.5" y="461.5" width="704" height="621" fill="none" stroke="#bdbdbd" stroke-width="8"/>
      <rect x="1146.5" y="461.5" width="704" height="621" fill="none" stroke="#fff" stroke-width="6"/>
      ${handles(frame)}
      <text x="1498.5" y="509" text-anchor="middle" class="ctitle" fill="#666">Q3 Totals</text>

      <path d="M1174 760A241 115 0 0 0 1336 870L1337 922.5A238 117 0 0 1 1177 812Z" fill="url(#wl)"/>
      <path d="M1336 870A241 115 0 0 0 1656 760L1653 812A238 117 0 0 1 1337 922.5Z" fill="url(#wr)"/>
      <path d="M1336 870L1337 922.5" stroke="#fff" stroke-width="1.5"/>
      <g stroke="#fff" stroke-width="2" stroke-linejoin="round">
        <path d="M1415 748L1415 645A241 115 0 0 1 1651 737Z" fill="#549e39"/>
        <path d="M1415 748L1651 737A241 115 0 0 1 1336 870Z" fill="#8ab833"/>
        <path d="M1415 748L1336 870A241 115 0 0 1 1186 726Z" fill="#bdcd38"/>
        <path d="M1415 748L1186 726A241 115 0 0 1 1415 645Z" fill="#029676"/>
      </g>

      <rect x="1681" y="729" width="156" height="139" fill="#fff" stroke="#7a7a7a" stroke-width="1.5"/>
      ${handles(leg, 11, 12)}
      ${items.map(([t, y, i]) => svg`<rect x="1692" y=${y - 3} width="8" height="8" fill=${THEME[i]}/><text x="1707" y=${y + 8} class="leg-text" fill="#666">${t}</text>`)}
      <rect x="1672" y="714" width="172" height="172" fill="none" stroke="#990099" stroke-width="10"/>
    </svg>`;
  }

  statusBar() {
    const icon = (vb: string, w: number, h: number, cls: string, c: unknown) => html`<svg class=${cls} viewBox=${vb} width=${w} height=${h}>${c}</svg>`;
    return html`<div class="status">
      <div class="st-l">
        <span>Slide 7 of 7</span>
        <span>English (United States)</span>
        <div class="acc">
          <svg viewBox="0 0 25 30" width="25" height="30"><circle cx="11" cy="5" r="3.5" fill="none" stroke="#555" stroke-width="1.4"/><path d="M3 7c5 5 11 5 17 0M7 11l3 10-5 8M15 11l-2 10 8 8M13 21l-5 8" fill="none" stroke="#555" stroke-width="1.4"/></svg>
          <span>Accessibility: Investigate</span>
        </div>
      </div>
      <div class="st-r">
        ${icon("0 0 21 24", 21, 24, "", svg`<path d="M10.5 1l5 6h-10z" fill="#555"/><path d="M0 10h21M0 16h21M3 22h15" stroke="#555" stroke-width="1.8"/>`)}
        <span class="m8">Notes</span>
        ${icon("0 0 21 22", 21, 22, "m33", svg`<path d="M1 0h19q1 0 1 1v15q0 1-1 1H9l-3 5v-5H1q-1 0-1-1V1q0-1 1-1z" fill="#555"/>`)}
        <span class="m7">Comments</span>
        <div class="active-view m17">
          ${icon("0 0 23 24", 23, 24, "", svg`<rect width="23" height="24" rx="1.5" fill="#fff"/><rect x="3" y="4" width="17" height="12" fill="#a9a9a9"/><rect x="6" y="8" width="9" height="3" fill="#fff"/><rect x="3" y="18" width="17" height="2" fill="#a9a9a9"/>`)}
        </div>
        ${icon("0 0 25 19", 25, 19, "m16", svg`<g fill="#555"><rect width="10.5" height="8" rx="1.5"/><rect x="14.5" width="10.5" height="8" rx="1.5"/><rect y="11" width="10.5" height="8" rx="1.5"/><rect x="14.5" y="11" width="10.5" height="8" rx="1.5"/></g>`)}
        ${icon("0 0 24 22", 24, 22, "m33", svg`<path d="M1 1.5q7-2 11 1q4-3 11-1v18q-7-2-11 1q-4-3-11-1zM12 2.5v18" fill="none" stroke="#555" stroke-width="1.3"/><path d="M4 6h5M4 9h5M4 12h5M4 15h5M15 6h5M15 9h5M15 12h5M15 15h5" stroke="#555" stroke-width="1.1"/>`)}
        ${icon("0 0 24 25", 24, 25, "m34", svg`<rect width="24" height="3.5" fill="#555"/><rect x="2" y="3" width="20" height="13" fill="none" stroke="#555" stroke-width="1.4"/><path d="M7 9h10M12 16v7M7 24h10" stroke="#555" stroke-width="1.6"/>`)}
        ${icon("0 0 13 4", 13, 4, "m28", svg`<rect width="13" height="3.5" fill="#555"/>`)}
        <div class="slider m12"><div class="thumbk"></div></div>
        ${icon("0 0 13 13", 13, 13, "m10", svg`<path d="M0 6.5h13M6.5 0v13" stroke="#555" stroke-width="3"/>`)}
        <span class="m26">107%</span>
        ${icon("0 0 20 22", 20, 22, "m33", svg`<rect x=".7" y=".7" width="18.6" height="20.6" fill="none" stroke="#555" stroke-width="1.3"/><path d="M10 3v4M8.3 5l1.7-2 1.7 2M10 19v-4M8.3 17l1.7 2 1.7-2M3 11h4M5 9.3L3 11l2 1.7M17 11h-4M15 9.3l2 1.7-2 1.7" fill="none" stroke="#555"/>`)}
      </div>
    </div>`;
  }
}
